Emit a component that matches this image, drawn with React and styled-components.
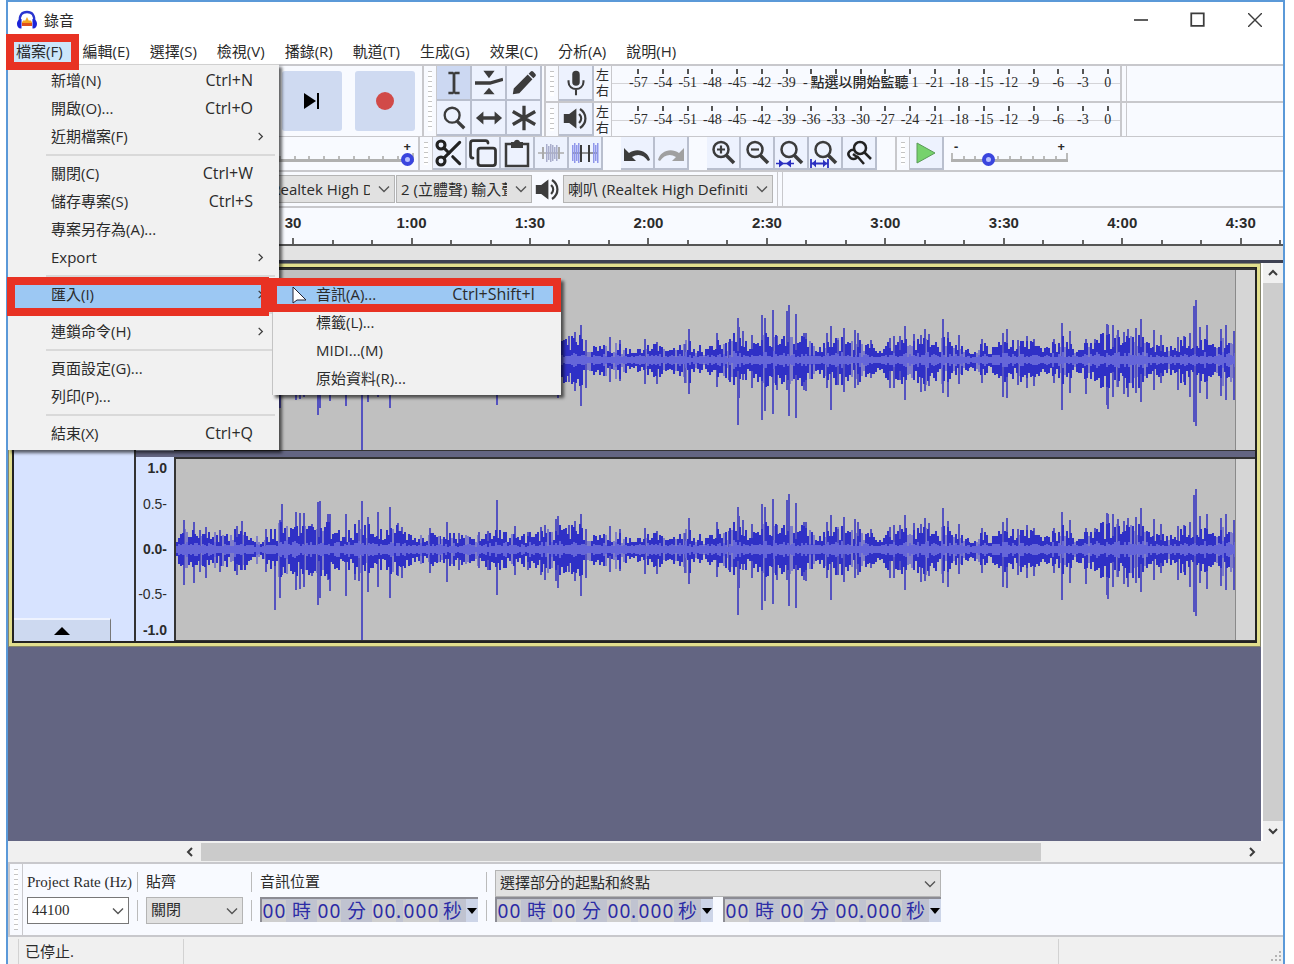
import React, { useState, useMemo } from "react";
import styled, { createGlobalStyle } from "styled-components";
import { Copy, Scissors } from "lucide-react";

const uiFont = `"Open Sans", "Noto Sans CJK TC", sans-serif`;
const serifFont = `"Liberation Serif", "Noto Sans CJK TC", serif`;

const ink = "#3c3c3c";
const line = "#c8c8cc";
const panel = "#f8faff";
const red = "#e83223";

const GlobalStyle = createGlobalStyle`
  * {
    box-sizing: border-box;
  }
  body {
    margin: 0;
    background: #fff;
    color: #2b2b2b;
    font: 15px/20px ${uiFont};
  }
  button, select, input {
    font: inherit;
    color: inherit;
    margin: 0;
  }
  button {
    border: 0;
    padding: 0;
    background: none;
  }
  svg {
    display: block;
    flex: none;
  }
`;

const Page = styled.div`
  height: 100vh;
  padding: 0 9px 0 6px;
`;

const Window = styled.main`
  position: relative;
  display: flex;
  flex-direction: column;
  height: 100%;
  border: 2px solid #5b99d8;
  border-bottom: 0;
  background: #fff;
`;

const TitleBar = styled.header`
  display: flex;
  align-items: center;
  height: 35px;
  padding-left: 8px;
`;

const Title = styled.h1`
  flex: 1;
  margin: 0 0 0 6px;
  font-size: 15px;
  font-weight: 400;
`;

const WindowButton = styled.button`
  display: flex;
  justify-content: center;
  width: 57px;
`;

const MenuBar = styled.nav`
  display: flex;
  height: 27px;
  padding: 2px 0 1px;
`;

const MenuBarButton = styled.button`
  position: relative;
  padding: 0 12px 0 8px;
  white-space: nowrap;
  background: ${(p) => (p.$open ? "#cce6fb" : "none")};
`;

const Callout = styled.span`
  position: absolute;
  inset: ${(p) => p.$inset};
  z-index: 3;
  border: 8px solid ${red};
  pointer-events: none;
`;

const Toolbars = styled.section`
  border-top: 2px solid ${line};
  background: ${panel};
`;

const ToolbarRow = styled.div`
  display: flex;
  height: ${(p) => p.$height}px;
  border-bottom: ${(p) => p.$edge || 1}px solid ${line};
`;

const Toolbar = styled.div`
  display: flex;
  align-items: ${(p) => p.$align || "stretch"};
  flex: none;
  width: ${(p) => (p.$width ? `${p.$width}px` : "auto")};
  justify-content: ${(p) => p.$justify || "flex-start"};
  gap: ${(p) => p.$gap || 0}px;
  padding-right: ${(p) => p.$padRight || 0}px;
`;

const Grip = styled.span`
  flex: none;
  width: 15px;
  padding: 5px 4px;
  border-left: 2px solid ${line};
  border-right: 1px solid ${line};
  background: repeating-linear-gradient(#c4c4c4 0 1px, #fff 1px 5px) content-box #fff;
`;

const TransportButton = styled.button`
  display: flex;
  align-items: center;
  justify-content: center;
  width: 60px;
  height: 60px;
  border-radius: 3px;
  background: #cfdaf1;
`;

const ToolGrid = styled.div`
  display: grid;
  grid-template-columns: repeat(3, 35px);
`;

const ToolButton = styled.button`
  display: flex;
  align-items: center;
  justify-content: center;
  width: ${(p) => p.$width || 34}px;
  border-right: 2px solid #b9bfce;
  border-bottom: 2px solid #b9bfce;
  background: ${(p) => (p.$active ? "#ccd8f2" : "#edf2fe")};
`;

const Gap = styled.span`
  flex: none;
  width: ${(p) => p.$width}px;
`;

const Meters = styled.div`
  flex: 1;
  min-width: 0;
  margin-left: 2px;
`;

const MeterRow = styled.div`
  display: flex;
  height: 35px;
  & + & {
    border-top: 2px solid ${line};
  }
`;

const Channels = styled.div`
  flex: none;
  width: 17px;
  padding-left: 2px;
  font-size: 13px;
  line-height: 16px;
`;

const Scale = styled.div`
  display: grid;
  grid-template-columns: repeat(20, 1fr);
  grid-template-rows: 8px 17px;
  flex: 1;
  min-width: 0;
  max-width: 510px;
  padding-left: 14px;
  border-left: 1px solid ${line};
  border-right: 1px solid ${line};
  font: 14px/17px ${serifFont};
  background: linear-gradient(#d4d4d8, #d4d4d8) 0 17px / 100% 1px no-repeat;
`;

const ScaleTick = styled.span`
  grid-row: 1;
  justify-self: center;
  align-self: end;
  width: 2px;
  height: 5px;
  background: #555;
`;

const ScaleLabel = styled.span`
  grid-row: 2;
  text-align: center;
`;

const MeterHint = styled.button`
  grid-row: 2;
  grid-column: 8 / span 5;
  display: flex;
  justify-content: space-between;
  padding: 0 4px;
  font: 500 14px/17px ${serifFont};
  white-space: nowrap;
`;

const Edges = styled.span`
  flex: none;
  width: 6px;
  margin-left: ${(p) => p.$offset || 0}px;
  border-left: 1px solid ${line};
  border-right: 1px solid ${line};
`;

const SliderBox = styled.div`
  width: ${(p) => p.$width}px;
  padding-top: 4px;
`;

const Signs = styled.div`
  display: flex;
  justify-content: space-between;
  padding: 0 3px;
  font-weight: 700;
  font-size: 13px;
  line-height: 11px;
`;

const SliderTrack = styled.div`
  display: grid;
  > * {
    grid-area: 1 / 1;
  }
`;

const Ticks = styled.div`
  display: flex;
  align-items: flex-end;
  justify-content: space-between;
  height: 7px;
  i {
    width: 2px;
    height: 3px;
    background: #bbb;
  }
  i:first-child, i:last-child {
    height: 6px;
  }
`;

const Range = styled.input`
  appearance: none;
  width: 100%;
  height: 15px;
  background: linear-gradient(#b0b0b0, #b0b0b0) 0 7px / 100% 3px no-repeat;
  &::-webkit-slider-thumb {
    appearance: none;
    width: 13px;
    height: 13px;
    border: 4px solid #3a45de;
    border-radius: 50%;
    background: #b9c0ff;
  }
`;

const SelectWrap = styled.span`
  display: grid;
  flex: none;
  align-items: center;
  width: ${(p) => (p.$width ? `${p.$width}px` : "100%")};
  height: ${(p) => p.$height || 28}px;
  > * {
    grid-area: 1 / 1;
  }
  svg {
    justify-self: end;
    margin-right: 5px;
    pointer-events: none;
  }
`;

const SelectBox = styled.select`
  appearance: none;
  width: 100%;
  height: 100%;
  padding: 0 24px 0 4px;
  border: 1px solid ${(p) => (p.$white ? "#777" : "#b4b4b4")};
  border-radius: 0;
  background: ${(p) => (p.$white ? "#fff" : "#e1e1e1")};
  font-family: ${(p) => (p.$serif ? serifFont : uiFont)};
  font-size: 15px;
`;

const Ruler = styled.div`
  height: 38px;
  overflow: hidden;
  border-bottom: 2px solid #555;
`;

const RulerGrid = styled.div`
  display: grid;
  grid-template-columns: 107fr repeat(10, 118fr);
  width: calc(100% + 17px);
  height: 100%;
`;

const RulerCell = styled.div`
  display: grid;
  grid-template-columns: repeat(3, 1fr);
  grid-template-rows: 30px 6px;
  justify-items: center;
  align-items: end;
  font: 700 15px/30px "Liberation Sans", sans-serif;
  strong {
    grid-column: 1 / -1;
    align-self: start;
  }
  i {
    width: 2px;
    height: 4px;
    background: #666;
  }
  i:nth-of-type(2) {
    height: 6px;
  }
`;

const RulerFoot = styled.div`
  height: 17px;
  border-bottom: 3px solid #3e4152;
  background: #e3e3e3;
`;

const Workspace = styled.section`
  display: flex;
  flex: 1;
  min-height: 0;
`;

const Canvas = styled.div`
  flex: 1;
  min-width: 0;
  margin-right: 2px;
  background: #636582;
`;

const Track = styled.article`
  display: flex;
  border: 1px solid #85856a;
  outline: 3px solid #e2df8e;
  outline-offset: -4px;
  padding: 3px;
`;

const TrackInner = styled.div`
  display: flex;
  flex: 1;
  min-width: 0;
  border: solid #222;
  border-width: 1px 2px 2px 2px;
`;

const TrackPanel = styled.aside`
  display: flex;
  flex-direction: column;
  justify-content: flex-end;
  flex: none;
  width: 122px;
  border-right: 2px solid #333;
  background: #d7e3ff;
`;

const CollapseButton = styled.button`
  display: flex;
  align-items: center;
  justify-content: center;
  width: 97px;
  height: 23px;
  border-top: 2px solid #eef3ff;
  border-right: 1px solid #777;
  background: #cdd9f0;
`;

const ChannelStack = styled.div`
  flex: 1;
  min-width: 0;
  background: #636582;
`;

const Channel = styled.div`
  display: flex;
  height: ${(p) => p.$height}px;
  & + & {
    margin-top: 6px;
  }
`;

const Levels = styled.div`
  display: grid;
  grid-template-rows: 1fr 2fr 2fr 2fr 1fr;
  flex: none;
  width: 38px;
  padding: 2px 3px 2px 0;
  background: #d7e3ff;
  text-align: right;
  font: 700 14px/18px "Liberation Sans", sans-serif;
  span {
    align-self: center;
    padding-right: 4px;
  }
  span:nth-child(even) {
    font-weight: 400;
  }
  span:first-child {
    align-self: start;
  }
  span:last-child {
    align-self: end;
  }
`;

const Clip = styled.div`
  display: flex;
  flex: 1;
  min-width: 0;
  border: solid #333;
  border-width: 2px 0 1px 2px;
  background: #d6d6d6;
  svg {
    flex: 1;
    min-width: 0;
    width: 100%;
    height: 100%;
    background: #c0c0c0;
  }
  &::after {
    content: "";
    flex: none;
    width: 19px;
    border-left: 1px solid #8a8a8a;
  }
`;

const VScroll = styled.div`
  display: flex;
  flex-direction: column;
  align-items: center;
  width: 20px;
  background: #cdcdcd;
  button {
    display: flex;
    align-items: center;
    justify-content: center;
    width: 100%;
    height: 20px;
    background: #f0f0f0;
  }
  span {
    flex: 1;
  }
`;

const HScroll = styled.div`
  display: flex;
  flex: none;
  height: 23px;
  padding: 2px 20px 1px 171px;
  border-bottom: 2px solid ${line};
  background: #f0f0f0;
  button {
    display: flex;
    align-items: center;
    justify-content: center;
    width: 22px;
  }
`;

const Thumb = styled.span`
  flex: ${(p) => p.$size};
  background: ${(p) => (p.$empty ? "none" : "#cbcbcb")};
`;

const SelectionBar = styled.section`
  display: flex;
  flex: none;
  height: 73px;
  border-bottom: 2px solid ${line};
  background: ${panel};
  font: 15px/25px ${serifFont};
`;

const Field = styled.div`
  display: flex;
  flex-direction: column;
  flex: none;
  gap: 2px;
  width: ${(p) => (p.$width ? `${p.$width}px` : "auto")};
  padding-top: 6px;
  white-space: nowrap;
  label, > span:first-child {
    height: 25px;
  }
`;

const Divider = styled.span`
  flex: none;
  width: 1px;
  margin: 8px 8px 14px;
  background: linear-gradient(#bbb 0 20px, transparent 20px 28px, #bbb 28px 48px);
`;

const TimeRow = styled.div`
  display: flex;
  gap: 10px;
`;

const TimeBox = styled.div`
  display: flex;
  align-items: center;
  width: 218px;
  height: 25px;
  border: 2px solid #8c8c94;
  border-width: 2px 0 0 2px;
  background: #c0c3d0;
  color: #2c2ca6;
  font: 19px/22px "Noto Sans", "Noto Sans CJK TC", sans-serif;
  b {
    width: 12px;
    font-weight: 400;
    text-align: center;
    background: #cfcfcf;
  }
  span {
    width: 31px;
    text-align: center;
  }
  span:last-of-type {
    width: 27px;
  }
  i {
    width: 7px;
    font-style: normal;
  }
  button {
    display: flex;
    flex: 1;
    align-items: center;
    justify-content: center;
    height: 100%;
    background: #cdd5e8;
  }
`;

const StatusBar = styled.footer`
  display: flex;
  flex: none;
  height: 27px;
  background: #f0f0f0;
  line-height: 24px;
`;

const StatusCell = styled.span`
  flex: ${(p) => p.$flex};
  margin-top: 2px;
  padding-left: 6px;
  border-left: 1px solid #d2d2d2;
`;

const Menu = styled.ul`
  position: absolute;
  top: ${(p) => p.$top}px;
  left: ${(p) => p.$left}px;
  z-index: 2;
  width: ${(p) => p.$width}px;
  margin: 0;
  padding: 1px 2px 3px 0;
  list-style: none;
  border-top: 1px solid #d0d0d0;
  border-left: ${(p) => (p.$sub ? "1px solid #c4c4c4" : "0")};
  background: #f1f1f1;
  box-shadow: 3px 3px 3px rgba(0, 0, 0, 0.6);
`;

const MenuRow = styled.li`
  position: relative;
`;

const MenuButton = styled.button`
  display: flex;
  align-items: center;
  width: 100%;
  height: 28px;
  padding: 0 ${(p) => (p.$arrow ? 11 : 24)}px 0 43px;
  background: ${(p) => (p.$active ? "#9cc8f3" : "none")};
  text-align: left;
  span {
    flex: 1;
  }
  kbd {
    font: 16px/20px ${uiFont};
  }
`;

const Separator = styled.li`
  height: 9px;
  margin: 0 2px 0 38px;
  background: linear-gradient(#d9d9d9, #d9d9d9) 0 4px / 100% 2px no-repeat;
`;

const Pointer = styled.svg`
  position: absolute;
  left: 19px;
  top: 6px;
  z-index: 4;
`;

const Stroke = ({ d, size = 12, width = 1.4, color = ink }) => (
  <svg width={size} height={size} viewBox="0 0 12 12" fill="none" stroke={color} strokeWidth={width}>
    <path d={d} />
  </svg>
);

const Icon = ({ children, size = 30 }) => (
  <svg width={size} height={size} viewBox="0 0 30 30" fill={ink} stroke="none">
    {children}
  </svg>
);

const Logo = () => (
  <svg width="22" height="20" viewBox="0 0 22 20">
    <path d="M6 12l2-2 1 1 2-4 2 4 1-1 2 2v4H6z" fill="#f5a623" />
    <path d="M6 13h10v3H6z" fill="#e0501c" />
    <path d="M4 12C3 5 6 2 11 2s8 3 7 10" fill="none" stroke="#2a35cf" strokeWidth="2.400" />
    <path d="M5.500 9C3 8.500 1 11 1 14s2 5 4.500 4.500zM16.500 9c2.500-.5 4.500 2 4.500 5s-2 5-4.500 4.500z" fill="#1c24d8" />
  </svg>
);

const Speaker = () => (
  <Icon size={27}>
    <path d="M2 10h6l8-6v22l-8-6H2z" />
    <path d="M19 10c3 3 3 7 0 10" fill="none" stroke={ink} strokeWidth="2.500" />
    <path d="M20 4.500c8 5 8 16 0 21" fill="none" stroke={ink} strokeWidth="2.500" />
  </Icon>
);

const Mic = () => (
  <Icon size={28}>
    <rect x="11" y="2" width="8" height="16" rx="4" />
    <path d="M7 12v2c0 10 16 10 16 0v-2M15 21v7" fill="none" stroke={ink} strokeWidth="2.200" />
  </Icon>
);

const Lens = ({ inner, children }) => (
  <Icon size={30}>
    <circle cx="13" cy="11.500" r="7.500" fill="none" stroke={ink} strokeWidth="2.500" />
    <path d="M18 17l8 8" stroke={ink} strokeWidth="3.500" />
    {inner && <path d={inner} stroke={ink} strokeWidth="2.200" />}
    {children}
  </Icon>
);

const editTools = [
  {
    name: "選取",
    active: true,
    icon: <path d="M9 3h5l1 1 1-1h5v2.500h-4.500v19H21V27h-5l-1-1-1 1H9v-2.500h4.500v-19H9z" />,
  },
  {
    name: "波封",
    icon: (
      <>
        <path d="M9 2h12l-6 8zM9 27h12l-6-7z" />
        <path d="M0 15h16l14-4" fill="none" stroke={ink} strokeWidth="3.500" />
      </>
    ),
  },
  {
    name: "繪製",
    icon: <path d="M3 27l1-6L19 6l5 5L10 26zM20 5l2-2c1-1 2-1 3 0l2 2c1 1 1 2 0 3l-2 2z" />,
  },
  {
    name: "縮放",
    icon: (
      <>
        <circle cx="13" cy="12" r="8" fill="none" stroke={ink} strokeWidth="2.500" />
        <path d="M18 18l8 8" stroke={ink} strokeWidth="3.500" />
      </>
    ),
  },
  {
    name: "時間移動",
    icon: <path d="M1 15l8-7v5h12V8l8 7-8 7v-5H9v5z" />,
  },
  {
    name: "多功能",
    icon: <path d="M15 2v26M3 8l24 14M3 22L27 8" stroke={ink} strokeWidth="3.500" />,
  },
];

const blueBars = (from, to, color) => {
  const heights = [6, 8, 10, 8, 10, 9, 7, 9, 8];
  const out = [];
  for (let x = from; x < to; x += 2) {
    const h = heights[Math.floor(x / 2) % 9];
    out.push(<rect key={x} x={x} y={15 - h} width="1.500" height={h * 2} fill={color} />);
  }
  return out;
};

const clipTools = [
  { name: "剪下", icon: <Scissors size={32} color="#222" strokeWidth={2.3} /> },
  { name: "複製", icon: <Copy size={30} color="#333" strokeWidth={2.2} /> },
  {
    name: "貼上",
    icon: (
      <Icon>
        <path d="M4 6h22v22H4z" fill="none" stroke={ink} strokeWidth="2.500" />
        <path d="M9 4h3c1-3 5-3 6 0h3v6H9z" />
      </Icon>
    ),
  },
  {
    name: "修剪",
    icon: (
      <Icon>
        <path d="M2 15h26" stroke="#aaa" strokeWidth="1.500" />
        {blueBars(10, 21, "#a9adcc")}
        <path d="M7 9v12M23 9v12" stroke="#aaa" strokeWidth="2" />
      </Icon>
    ),
  },
  {
    name: "靜音",
    icon: (
      <Icon>
        <path d="M2 15h26" stroke="#777" strokeWidth="1.500" />
        {blueBars(2, 9, "#8f96ea")}
        {blueBars(23, 29, "#8f96ea")}
        <path d="M11 7v17M19 7v17" stroke={ink} strokeWidth="2" />
      </Icon>
    ),
  },
];

const historyTools = [
  {
    name: "復原",
    icon: (
      <Icon>
        <path d="M2 10v13h12l-4-4c6-4 12-2 16 4l2-1C26 13 15 9 7 15z" />
      </Icon>
    ),
  },
  {
    name: "重做",
    icon: (
      <Icon>
        <path d="M28 10v13H16l4-4c-6-4-12-2-16 4l-2-1C4 13 15 9 23 15z" fill="#a0a0a0" />
      </Icon>
    ),
  },
];

const zoomTools = [
  { name: "放大", icon: <Lens inner="M9 11.500h8M13 7.500v8" /> },
  { name: "縮小", icon: <Lens inner="M9 11.500h8" /> },
  {
    name: "縮放至選取",
    icon: (
      <Lens>
        <path d="M0 25.500h18" stroke="#2a2fc0" strokeWidth="1.500" />
        <path d="M3 21.500l5 4-5 4zM15 21.500l-5 4 5 4z" fill="#2a2fc0" />
      </Lens>
    ),
  },
  {
    name: "縮放至專案",
    icon: (
      <Lens>
        <path d="M1 21v9M18 21v9M1 25.500h17" stroke="#2a2fc0" strokeWidth="1.800" />
        <path d="M2 25.500l4-4v8zM17 25.500l-4-4v8z" fill="#2a2fc0" />
      </Lens>
    ),
  },
  {
    name: "縮放切換",
    icon: (
      <Icon>
        <g fill="none" stroke="#222" strokeWidth="2.500">
          <circle cx="16" cy="10" r="6" />
          <path d="M11 12c-5-1-8 3-6 6 2 4 7 4 9 0M20 14l7 7M13 18l7 8" />
          <path d="M9 16l4 3" />
        </g>
      </Icon>
    ),
  },
];

const menuTitles = [
  "檔案(F)", "編輯(E)", "選擇(S)", "檢視(V)", "播錄(R)",
  "軌道(T)", "生成(G)", "效果(C)", "分析(A)", "說明(H)",
];

const importItems = [
  { label: "音訊(A)...", keys: "Ctrl+Shift+I", active: true },
  { label: "標籤(L)..." },
  { label: "MIDI...(M)" },
  { label: "原始資料(R)..." },
];

const fileItems = [
  { label: "新增(N)", keys: "Ctrl+N" },
  { label: "開啟(O)...", keys: "Ctrl+O" },
  { label: "近期檔案(F)", arrow: true },
  null,
  { label: "關閉(C)", keys: "Ctrl+W" },
  { label: "儲存專案(S)", keys: "Ctrl+S" },
  { label: "專案另存為(A)..." },
  { label: "Export", arrow: true },
  null,
  { label: "匯入(I)", arrow: true, active: true, items: importItems },
  null,
  { label: "連鎖命令(H)", arrow: true },
  null,
  { label: "頁面設定(G)..." },
  { label: "列印(P)..." },
  null,
  { label: "結束(X)", keys: "Ctrl+Q" },
];

// [x, height above the centre line, depth below it]
const spikes = [
  [7, 29, 35], [17, 27, 33], [23, 19, 22], [29, 22, 28], [43, 19, 22], [60, 23, 25], [65, 28, 20],
  [89, 20, 22], [98, 18, 60], [103, 29, 48], [105, 45, 25], [119, 37, 40], [123, 36, 39], [127, 36, 37],
  [135, 25, 26], [141, 47, 55], [143, 48, 48], [151, 35, 30], [153, 35, 41], [169, 35, 46], [178, 25, 30],
  [182, 29, 31], [185, 48, 91], [191, 32, 42], [201, 37, 37], [213, 42, 48], [221, 26, 26], [225, 22, 28],
  [253, 21, 23], [271, 27, 32], [283, 16, 20], [303, 17, 18], [312, 18, 20], [321, 49, 45], [339, 23, 25],
  [352, 17, 20], [365, 22, 25], [369, 24, 30], [380, 30, 31], [382, 33, 38], [393, 24, 22], [399, 28, 31],
  [405, 35, 46], [410, 20, 28], [434, 23, 22], [444, 20, 21], [469, 21, 24], [481, 18, 24], [509, 16, 23],
  [513, 31, 34], [541, 27, 27], [553, 18, 20], [562, 42, 65], [563, 33, 38], [567, 29, 20], [576, 25, 28],
  [586, 45, 60], [589, 42, 51], [597, 50, 54], [601, 24, 30], [611, 49, 30], [613, 55, 56], [620, 46, 58],
  [628, 27, 30], [630, 27, 31], [651, 27, 28], [655, 34, 50], [662, 20, 25], [668, 32, 32], [679, 30, 28],
  [682, 27, 25], [695, 20, 18], [714, 22, 28], [718, 24, 28], [724, 24, 20], [729, 34, 40], [738, 26, 20],
  [745, 25, 32], [749, 31, 31], [753, 26, 26], [767, 41, 33], [772, 28, 37], [783, 25, 24], [807, 21, 23],
  [828, 27, 37], [832, 31, 38], [843, 20, 25], [852, 24, 28], [859, 21, 26], [879, 21, 23], [887, 37, 50],
  [895, 29, 33], [911, 21, 34], [920, 21, 15], [926, 20, 20], [932, 36, 45], [933, 35, 49], [938, 35, 37],
  [943, 30, 27], [949, 28, 34], [953, 31, 37], [961, 32, 33], [966, 41, 42], [979, 30, 30], [986, 25, 23],
  [1003, 23, 30], [1009, 24, 22], [1015, 27, 37], [1019, 54, 62], [1021, 60, 66], [1025, 33, 33],
  [1032, 35, 39], [1046, 31, 36], [1051, 35, 40], [1059, 29, 40],
];

const buildWave = () => {
  let seed = 7;
  const rand = () => {
    seed = (seed * 16807) % 2147483647;
    return seed / 2147483647;
  };
  let soft = "";
  let peaks = "";
  let rms = "";
  for (let x = 0; x < 1061; x += 2) {
    // louder where there are many spikes nearby
    const near = spikes.reduce((sum, [sx, up]) => {
      const d = Math.abs(sx - x);
      return d < 12 ? sum + (up * (12 - d)) / 12 : sum;
    }, 0);
    const body = 10 + Math.min(near * 0.17, 10);
    const swing = 0.4 + rand() * 0.8;
    const up = Math.round(body * (swing + rand() * 0.2));
    const down = Math.round(body * (swing + rand() * 0.3));
    const mid = Math.round(2 + Math.min(up, down) * (0.05 + rand() * 0.25));
    const bar = `M${x} ${90 - up}h2v${up + down}h-2z`;
    if (rand() > 0.85) soft += bar;
    else peaks += bar;
    rms += `M${x} ${90 - mid}h2v${mid * 2}h-2z`;
  }
  const tall = spikes.map(([x, up, down]) => `M${x} ${90 - up}h2v${up + down}h-2z`).join("");
  return { soft, peaks, rms, tall };
};

const Waveform = () => {
  const { soft, peaks, rms, tall } = useMemo(buildWave, []);
  return (
    <svg viewBox="0 0 1061 180" preserveAspectRatio="none" shapeRendering="crispEdges">
      <path d={soft} fill="#7f7ec8" />
      <path d={tall} fill="#5553c0" />
      <path d={peaks} fill="#2f30c6" />
      <path d={rms} fill="#6566d9" />
    </svg>
  );
};

const Dropdown = ({ id, label, width, height, value, white, serif }) => (
  <SelectWrap $width={width} $height={height}>
    <SelectBox id={id} aria-label={label} $white={white} $serif={serif}>
      <option>{value}</option>
    </SelectBox>
    <Stroke d="M1 3.500l5 5 5-5" color="#555" />
  </SelectWrap>
);

const Slider = ({ label, width, start, ticks }) => {
  const [value, setValue] = useState(start);
  return (
    <SliderBox $width={width}>
      <Signs>
        <span>-</span>
        <span>+</span>
      </Signs>
      <SliderTrack>
        <Ticks>
          {Array.from({ length: ticks }, (_, i) => (
            <i key={i} />
          ))}
        </Ticks>
        <Range type="range" aria-label={label} value={value} onChange={(e) => setValue(e.target.value)} />
      </SliderTrack>
    </SliderBox>
  );
};

const Meter = ({ name, icon, hint }) => (
  <MeterRow>
    <Grip />
    <ToolButton aria-label={name} $width={35}>
      {icon}
    </ToolButton>
    <Channels>
      左
      <br />右
    </Channels>
    <Scale>
      {Array.from({ length: 20 }, (_, i) => (
        <ScaleTick key={i} />
      ))}
      {Array.from({ length: 20 }, (_, i) =>
        hint && i > 6 && i < 12 ? null : (
          <ScaleLabel key={i} style={{ gridColumn: i + 1 }}>
            {i * 3 - 57}
          </ScaleLabel>
        )
      )}
      {hint && (
        <MeterHint>
          <span>-</span>
          <span>{hint}</span>
          <span>1</span>
        </MeterHint>
      )}
    </Scale>
    <Edges />
  </MeterRow>
);

const TimeField = ({ label }) => (
  <TimeBox role="group" aria-label={label}>
    <b>0</b>
    <b>0</b>
    <span>時</span>
    <b>0</b>
    <b>0</b>
    <span>分</span>
    <b>0</b>
    <b>0</b>
    <i>.</i>
    <b>0</b>
    <b>0</b>
    <b>0</b>
    <span>秒</span>
    <button aria-label="格式">
      <svg width="10" height="6" viewBox="0 0 10 6">
        <path d="M0 0h10L5 6z" />
      </svg>
    </button>
  </TimeBox>
);

const MenuList = ({ items, ...rest }) => (
  <Menu role="menu" {...rest}>
    {items.map((item, i) =>
      item ? (
        <MenuRow key={item.label}>
          <MenuButton role="menuitem" $active={item.active} $arrow={item.arrow}>
            <span>{item.label}</span>
            {item.keys && <kbd>{item.keys}</kbd>}
            {item.arrow && <Stroke d="M4 2l4 4-4 4" size={11} />}
          </MenuButton>
          {item.items && (
            <>
              <Callout $inset="-3px 8px -8px -1px" />
              <MenuList items={item.items} $top={-2} $left={264} $width={289} $sub />
            </>
          )}
          {item.keys === "Ctrl+Shift+I" && (
            <>
              <Callout $inset="-2px -2px -4px -4px" />
              <Pointer width="16" height="18" viewBox="0 0 16 18">
                <path d="M1 1v16l4-3h9z" fill="#fff" stroke="#223" />
              </Pointer>
            </>
          )}
        </MenuRow>
      ) : (
        <Separator key={i} />
      )
    )}
  </Menu>
);

const levels = ["1.0", "0.5-", "0.0-", "-0.5-", "-1.0"];
const times = ["0", "30", "1:00", "1:30", "2:00", "2:30", "3:00", "3:30", "4:00", "4:30"];

const App = () => {
  const [openMenu, setOpenMenu] = useState(0);

  return (
    <Page>
      <GlobalStyle />
      <Window>
        <TitleBar>
          <Logo />
          <Title>錄音</Title>
          <WindowButton aria-label="最小化">
            <Stroke d="M0 6h12" size={14} />
          </WindowButton>
          <WindowButton aria-label="最大化">
            <Stroke d="M1 1h10v10H1z" size={15} />
          </WindowButton>
          <WindowButton aria-label="關閉">
            <Stroke d="M0 0l12 12M12 0L0 12" size={14} width={1.2} />
          </WindowButton>
        </TitleBar>

        <MenuBar>
          {menuTitles.map((title, i) => (
            <MenuBarButton key={title} $open={openMenu === i} onClick={() => setOpenMenu(i)}>
              {title}
              {openMenu === i && <Callout $inset="-5px -4px -7px -2px" />}
            </MenuBarButton>
          ))}
        </MenuBar>

        <Toolbars>
          <ToolbarRow $height={71}>
            <Toolbar $width={414} $align="center" $justify="flex-end" $gap={13} $padRight={7}>
              <TransportButton aria-label="停止">
                <Icon size={22}>
                  <path d="M4 4h22v22H4z" />
                </Icon>
              </TransportButton>
              <TransportButton aria-label="跳至終點">
                <svg width="18" height="18" viewBox="0 0 18 18">
                  <path d="M1 1l12 8-12 8zM14 1h2v16h-2z" />
                </svg>
              </TransportButton>
              <TransportButton aria-label="錄音">
                <svg width="20" height="20" viewBox="0 0 20 20">
                  <circle cx="10" cy="10" r="9" fill="#d14a48" />
                </svg>
              </TransportButton>
            </Toolbar>
            <Toolbar>
              <Grip />
              <ToolGrid>
                {editTools.map(({ name, icon, active }) => (
                  <ToolButton key={name} aria-label={name} $active={active} $width={35}>
                    <Icon size={28}>{icon}</Icon>
                  </ToolButton>
                ))}
              </ToolGrid>
            </Toolbar>
            <Meters>
              <Meter name="錄音音量" icon={<Mic />} hint="點選以開始監聽" />
              <Meter name="播放音量" icon={<Speaker />} />
            </Meters>
          </ToolbarRow>

          <ToolbarRow $height={35} $edge={2}>
            <Toolbar $width={410} $justify="flex-end" $padRight={4}>
              <Slider label="播放音量" width={150} start={100} ticks={11} />
            </Toolbar>
            <Toolbar>
              <Grip />
              {clipTools.map(({ name, icon }) => (
                <ToolButton key={name} aria-label={name}>
                  {icon}
                </ToolButton>
              ))}
              <Gap $width={18} />
              {historyTools.map(({ name, icon }) => (
                <ToolButton key={name} aria-label={name}>
                  {icon}
                </ToolButton>
              ))}
              <Gap $width={18} />
              {zoomTools.map(({ name, icon }) => (
                <ToolButton key={name} aria-label={name}>
                  {icon}
                </ToolButton>
              ))}
              <Gap $width={18} />
              <Grip />
              <ToolButton aria-label="播放">
                <svg width="20" height="22" viewBox="0 0 20 22">
                  <path d="M1 1l18 10L1 21z" fill="#76d26c" stroke="#5a9a58" />
                </svg>
              </ToolButton>
              <Gap $width={7} />
              <Slider label="播放速度" width={117} start={30} ticks={11} />
            </Toolbar>
          </ToolbarRow>

          <ToolbarRow $height={36} $edge={2}>
            <Toolbar $align="center">
              <Gap $width={15} />
              <Dropdown label="音訊主機" width={162} value="MME" />
              <Mic />
              <Dropdown label="錄音裝置" width={182} value="麥克風 (Realtek High Definition Audio)" />
              <Gap $width={1} />
              <Dropdown label="錄音聲道" width={136} value="2 (立體聲) 輸入聲道" />
              <Gap $width={2} />
              <Speaker />
              <Gap $width={2} />
              <Dropdown label="播放裝置" width={210} value="喇叭 (Realtek High Definition Audio)" />
            </Toolbar>
            <Edges $offset={4} />
          </ToolbarRow>

          <Ruler>
            <RulerGrid>
              <span />
              {times.map((time) => (
                <RulerCell key={time}>
                  <strong>{time}</strong>
                  <i />
                  <i />
                  <i />
                </RulerCell>
              ))}
            </RulerGrid>
          </Ruler>
          <RulerFoot />
        </Toolbars>

        <Workspace>
          <Canvas>
            <Track>
              <TrackInner>
                <TrackPanel>
                  <CollapseButton aria-label="摺疊">
                    <svg width="16" height="8" viewBox="0 0 16 8">
                      <path d="M0 8h16L8 0z" />
                    </svg>
                  </CollapseButton>
                </TrackPanel>
                <ChannelStack>
                  {[183, 184].map((height) => (
                    <Channel key={height} $height={height}>
                      <Levels>
                        {levels.map((level) => (
                          <span key={level}>{level}</span>
                        ))}
                      </Levels>
                      <Clip>
                        <Waveform />
                      </Clip>
                    </Channel>
                  ))}
                </ChannelStack>
              </TrackInner>
            </Track>
          </Canvas>
          <VScroll>
            <button aria-label="向上">
              <Stroke d="M2 8l4-4 4 4" width={2} />
            </button>
            <span />
            <button aria-label="向下">
              <Stroke d="M2 4l4 4 4-4" width={2} />
            </button>
          </VScroll>
        </Workspace>

        <HScroll>
          <button aria-label="向左">
            <Stroke d="M8 2L4 6l4 4" width={2} />
          </button>
          <Thumb $size={840} />
          <Thumb $size={200} $empty />
          <button aria-label="向右">
            <Stroke d="M4 2l4 4-4 4" width={2} />
          </button>
        </HScroll>

        <SelectionBar>
          <Grip />
          <Gap $width={4} />
          <Field $width={102}>
            <label htmlFor="rate">Project Rate (Hz)</label>
            <Dropdown id="rate" height={25} value="44100" white serif />
          </Field>
          <Divider />
          <Field $width={97}>
            <label htmlFor="snap">貼齊</label>
            <Dropdown id="snap" height={25} value="關閉" serif />
          </Field>
          <Divider />
          <Field>
            <span>音訊位置</span>
            <TimeField label="音訊位置" />
          </Field>
          <Divider />
          <Field $width={446}>
            <Dropdown label="選擇範圍" height={25} value="選擇部分的起點和終點" serif />
            <TimeRow>
              <TimeField label="起點" />
              <TimeField label="終點" />
            </TimeRow>
          </Field>
        </SelectionBar>

        <StatusBar>
          <Gap $width={10} />
          <StatusCell $flex="0 0 165px">已停止.</StatusCell>
          <StatusCell $flex="1" />
          <StatusCell $flex="0 0 213px" />
          <svg width="12" height="27" viewBox="0 0 12 27" fill="#b4b4b4">
            <path d="M8 14h2v2H8zM8 18h2v2H8zM8 22h2v2H8zM4 18h2v2H4zM4 22h2v2H4zM0 22h2v2H0z" />
          </svg>
        </StatusBar>

        {openMenu === 0 && <MenuList items={fileItems} $top={62} $left={0} $width={271} />}
      </Window>
    </Page>
  );
};

export default App;
